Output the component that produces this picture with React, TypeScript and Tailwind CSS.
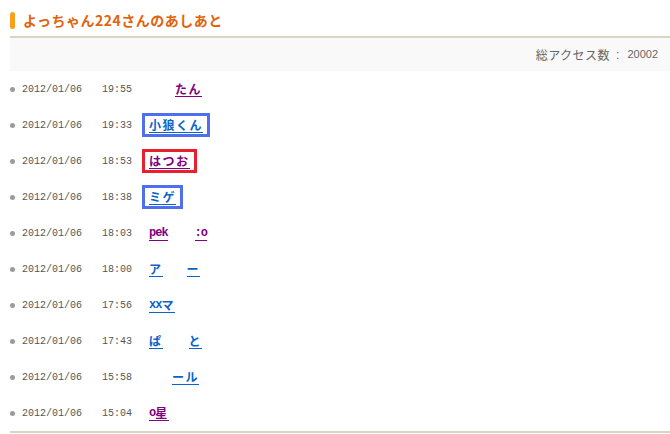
import React from "react";

type Part = { t?: string; gap?: number; l?: boolean };
type Row = {
  date: string;
  time: string;
  parts: Part[];
  color: "blue" | "purple";
  box?: "blue" | "red";
};

const rows: Row[] = [
  { date: "2012/01/06", time: "19:55", parts: [{ gap: 26 }, { t: "たん" }], color: "purple" },
  { date: "2012/01/06", time: "19:33", parts: [{ t: "小狼くん" }], color: "blue", box: "blue" },
  { date: "2012/01/06", time: "18:53", parts: [{ t: "はつお" }], color: "purple", box: "red" },
  { date: "2012/01/06", time: "18:38", parts: [{ t: "ミゲ" }], color: "blue", box: "blue" },
  { date: "2012/01/06", time: "18:03", parts: [{ t: "pek", l: true }, { gap: 27 }, { t: ":o", l: true }], color: "purple" },
  { date: "2012/01/06", time: "18:00", parts: [{ t: "ア" }, { gap: 24 }, { t: "ー" }], color: "blue" },
  { date: "2012/01/06", time: "17:56", parts: [{ t: "xx", l: true }, { t: "マ" }], color: "blue" },
  { date: "2012/01/06", time: "17:43", parts: [{ t: "ぱ" }, { gap: 26 }, { t: "と" }], color: "blue" },
  { date: "2012/01/06", time: "15:58", parts: [{ gap: 23 }, { t: "ール" }], color: "blue" },
  { date: "2012/01/06", time: "15:04", parts: [{ t: "o", l: true }, { t: "星" }], color: "purple" },
];

function Name({ row }: { row: Row }) {
  const colorCls = row.color === "blue" ? "text-[#0a64c8]" : "text-[#800080]";
  const inner = (
    <span className={`flex items-end text-[12px] font-bold ${colorCls}`}>
      {row.parts.map((p, i) =>
        p.gap ? (
          <span key={i} className="inline-block" style={{ width: p.gap }} />
        ) : p.l ? (
          <span
            key={i}
            className="inline-block border-b border-current font-['Liberation_Mono',monospace] leading-[14px] tracking-[-1px]"
          >
            {p.t}
          </span>
        ) : (
          <span
            key={i}
            className="inline-block border-b border-current font-['Noto_Sans_CJK_JP',sans-serif] leading-[14px] tracking-[1.5px]"
          >
            {p.t}
          </span>
        )
      )}
    </span>
  );
  if (row.box) {
    const b = row.box === "blue" ? "border-[#4f6ef0]" : "border-[#e8202c]";
    return (
      <span className={`-ml-[7px] inline-flex h-[24px] items-center border-[3px] pl-[4px] pr-[4px] ${b}`}>
        {inner}
      </span>
    );
  }
  return inner;
}

export default function App() {
  return (
    <div className="h-[434px] w-[670px] overflow-hidden bg-white font-['Liberation_Sans','Noto_Sans_CJK_JP',sans-serif]">
      <div className="pl-[10px]">
        <div className="flex h-[36px] items-start gap-[8px] pt-[12px]">
          <div className="h-[17px] w-[5px] rounded-full bg-[#f7a11d]" />
          <div className="font-['Noto_Sans_CJK_JP',sans-serif] text-[14px] font-bold leading-[17px] tracking-[0.5px] text-[#e0640c]">
            よっちゃん224さんのあしあと
          </div>
        </div>
        <div className="h-[2px] bg-[#ddd3c3]" />
        <div className="flex h-[33px] items-center justify-end bg-[#f9f9f9] pr-[12px] text-[#666666]">
          <span className="font-['Noto_Sans_CJK_JP',sans-serif] text-[12px] tracking-[0.5px]">総アクセス数</span>
          <span className="ml-[6px] font-['Liberation_Sans',sans-serif] text-[12px]">:</span>
          <span className="ml-[8px] font-['Liberation_Sans',sans-serif] text-[11px]">20002</span>
        </div>
        {rows.map((r, i) => (
          <div key={i} className="flex h-[36px] items-center">
            <div className="flex w-[12px] items-center">
              <div className="h-[5px] w-[5px] rounded-full bg-[#9b9b9b]" />
            </div>
            <div className="w-[80px] font-['Liberation_Mono',monospace] text-[10px] text-[#555555]">{r.date}</div>
            <div className="w-[47px] font-['Liberation_Mono',monospace] text-[10px] text-[#555555]">{r.time}</div>
            <Name row={r} />
          </div>
        ))}
        <div className="h-[2px] bg-[#ddd3c3]" />
      </div>
    </div>
  );
}
